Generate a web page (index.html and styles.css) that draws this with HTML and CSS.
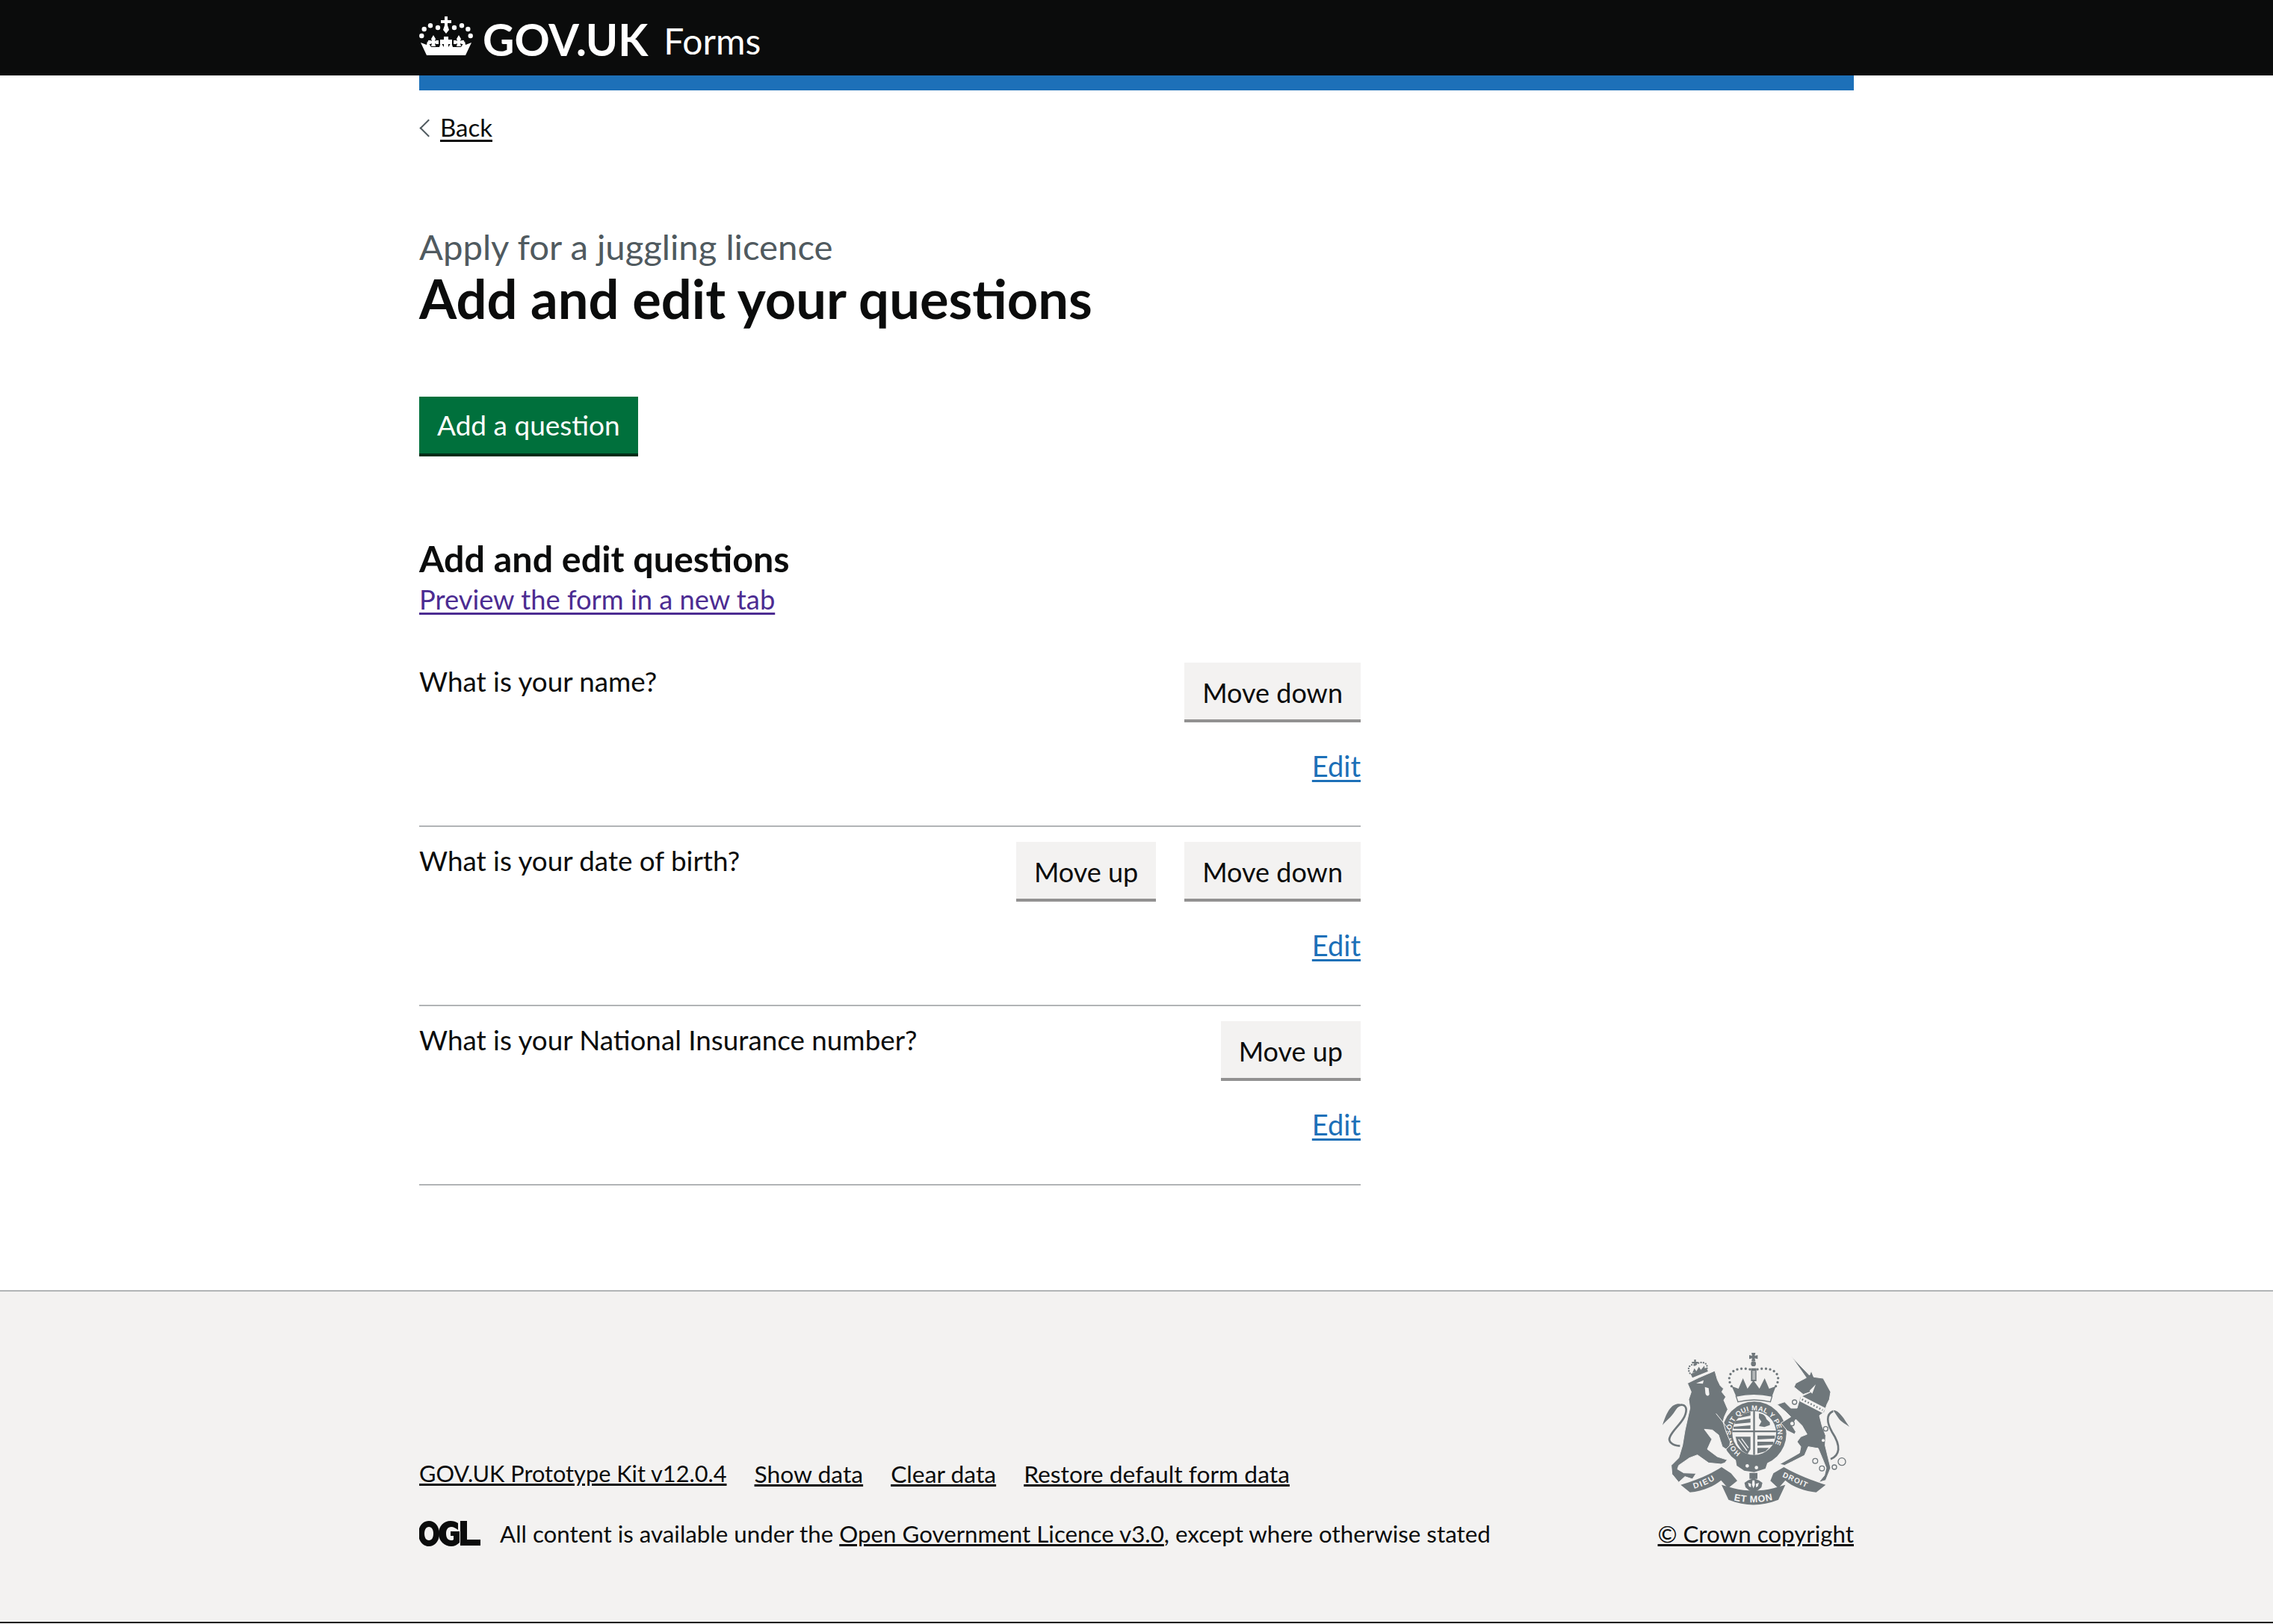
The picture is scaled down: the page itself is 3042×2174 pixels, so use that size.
FILE: index.html
```html
<!DOCTYPE html>
<html lang="en">
<head>
    <meta charset="UTF-8">
    <title>Add and edit your questions - GOV.UK Forms</title>
    <link rel="stylesheet" href="styles.css">
</head>
<body>
    <header class="header">
        <div class="width-container header-inner">
            <a class="logo" href="#">
                <svg class="crown" viewBox="0 0 72 52" aria-hidden="true">
                    <g fill="#fff">
                        <circle cx="3.300" cy="26" r="3.200"/><circle cx="68.700" cy="26" r="3.200"/>
                        <circle cx="6.700" cy="17" r="3.200"/><circle cx="65.300" cy="17" r="3.200"/>
                        <circle cx="15" cy="12.300" r="3.200"/><circle cx="57" cy="12.300" r="3.200"/>
                        <circle cx="25" cy="15" r="3.200"/><circle cx="47" cy="15" r="3.200"/>
                        <path d="M34 0h4v5h5v4h-5v3l2 6-4 5-4-5 2-6V9h-5V5h5z"/>
                        <path d="M19 25l3 5-1 3 2-1h3v5h-3l-2-1 1 4h-6l1-4-2 1h-3v-5h3l2 1-1-3z"/>
                        <path d="M53 25l3 5-1 3 2-1h3v5h-3l-2-1 1 4h-6l1-4-2 1h-3v-5h3l2 1-1-3z"/>
                        <path d="M33 27h6v4h5v6h-5v4h-6v-4h-5v-6h5z"/>
                        <path d="M2 35l8 3 1-5 5 8h11l2-6 4 6h6l4-6 2 6h11l5-8 1 5 8-3-8 17H10z"/>
                    </g>
                </svg>
                <span class="logo-text">GOV.UK</span>
            </a>
            <a class="service-name" href="#">Forms</a>
        </div>
    </header>

    <div class="width-container">
        <div class="blue-bar"></div>
        <a class="back-link" href="#">Back</a>

        <main class="main">
            <span class="caption">Apply for a juggling licence</span>
            <h1 class="heading-xl">Add and edit your questions</h1>
            <a class="button button-green" href="#">Add a question</a>

            <h2 class="heading-m">Add and edit questions</h2>
            <a class="preview-link" href="#">Preview the form in a new tab</a>

            <ul class="question-list">
                <li class="question">
                    <span class="question-text">What is your name?</span>
                    <div class="question-actions">
                        <div class="button-row">
                            <button class="button button-grey">Move down</button>
                        </div>
                        <a class="edit-link" href="#">Edit</a>
                    </div>
                </li>
                <li class="question">
                    <span class="question-text">What is your date of birth?</span>
                    <div class="question-actions">
                        <div class="button-row">
                            <button class="button button-grey">Move up</button>
                            <button class="button button-grey">Move down</button>
                        </div>
                        <a class="edit-link" href="#">Edit</a>
                    </div>
                </li>
                <li class="question">
                    <span class="question-text">What is your National Insurance number?</span>
                    <div class="question-actions">
                        <div class="button-row">
                            <button class="button button-grey">Move up</button>
                        </div>
                        <a class="edit-link" href="#">Edit</a>
                    </div>
                </li>
            </ul>
        </main>
    </div>

    <footer class="footer">
        <div class="width-container footer-inner">
            <div class="footer-meta">
                <ul class="footer-links">
                    <li class="kit-version"><a href="#">GOV.UK Prototype Kit v12.0.4</a></li>
                    <li><a href="#">Show data</a></li>
                    <li><a href="#">Clear data</a></li>
                    <li><a href="#">Restore default form data</a></li>
                </ul>
                <div class="licence">
                    <svg class="ogl" viewBox="0 0 82 34" aria-hidden="true">
                        <g fill="#0b0c0c">
                            <path fill-rule="evenodd" d="M13 0c8 0 14 7 14 17s-6 17-14 17S-1 27-1 17 5 0 13 0zm0 8c-4 0-6 4-6 9s2 9 6 9 6-4 6-9-2-9-6-9z"/>
                            <path d="M42 0c4 0 7 1 10 3v9c-3-2-6-4-9-4-5 0-7 4-7 9s2 9 7 9c1 0 2 0 3-1v-5h-4v-6h12v15c-3 3-7 5-11 5-9 0-17-7-17-17S33 0 42 0z"/>
                            <path d="M55 0h9v25h18v8H55z"/>
                        </g>
                    </svg>
                    <span>All content is available under the <a href="#">Open Government Licence v3.0</a>, except where otherwise stated</span>
                </div>
            </div>
            <div class="copyright">
                <svg class="crest" viewBox="135 88 750 612" aria-hidden="true">
                    <defs>
                        <path id="ring-arc" d="M449 490A94 94 0 1 1 557 490"/>
                        <path id="dieu-arc" d="M262 634Q320 618 372 580"/>
                        <path id="droit-arc" d="M615 585Q670 610 735 640"/>
                        <path id="motto-arc" d="M412 678Q498 700 588 676"/>
                        <clipPath id="shield-clip"><circle cx="503" cy="410" r="88"/></clipPath>
                    </defs>

                    <!-- ring and shield -->
                    <circle fill="#6f777b" cx="503" cy="413" r="129"/>
                    <circle fill="#f3f2f1" cx="503" cy="410" r="88"/>
                    <g fill="#6f777b" clip-path="url(#shield-clip)">
                        <path d="M499 316h7v196h-7zM410 400h190v7H410z"/>
                        <path d="M430 342l58-18v16l-58 12zM425 362l63-10v16l-63 6zM420 385l68-6v14h-68z"/>
                        <path d="M522 332c14-2 28 10 30 22l14 14v10l-22 8-22-4 10-18-10-14z"/>
                        <path d="M428 425h60v50l-12 20-22-14-18-28z"/>
                        <path d="M516 420h70v12l-70 4zM516 445h64v12l-64 4zM516 470h46l-14 14-32 8z"/>
                    </g>
                    <path fill="none" stroke="#f3f2f1" stroke-width="4" d="M440 435l34 46M452 432l28 38"/>
                    <text fill="#f3f2f1" class="crest-text" font-size="28" letter-spacing="1.300"><textPath href="#ring-arc">HONI SOIT QUI MAL Y PENSE</textPath></text>

                    <!-- royal crown -->
                    <g fill="#6f777b">
                        <path d="M492 88h16l-3 12 12-3v16l-12-3 3 12h-16l3-12-12 3V97l12 3z"/>
                        <circle cx="500" cy="132" r="10"/>
                        <path d="M490 150h22v52h-22z"/>
                        <path d="M413 222l27 10 18-42 18 42 24-34 24 34 21-42 18 42 27-10-15 40q-75-14-145 0z"/>
                    </g>
                    <path fill="#f3f2f1" d="M497 160h3v36h-3zM503 160h3v36h-3z"/>
                    <path fill="#f3f2f1" stroke="#6f777b" stroke-width="4" d="M430 262q70-16 145 0l-7 23q-65-16-130 0z"/>
                    <g fill="none" stroke="#6f777b" stroke-width="10" stroke-linecap="round" stroke-dasharray="0 17">
                        <path d="M412 222C385 175 420 140 490 155"/>
                        <path d="M590 222C617 175 582 140 512 155"/>
                    </g>

                    <!-- scroll under the shield -->
                    <path fill="#6f777b" d="M428 510l30-8 45 18 40-4 20-8-15 45-45 14-40-6-30-20z"/>
                    <g fill="#f3f2f1">
                        <circle cx="475" cy="542" r="7"/><circle cx="512" cy="549" r="7"/>
                    </g>

                    <!-- lion -->
                    <g transform="translate(105 60)">
                        <path fill="#6f777b" stroke="#f3f2f1" stroke-width="3" d="M130 150L175 128L240 100L250 135L262 160L275 172L268 185L284 205L276 218L292 255L278 285L273 305L285 345L302 385L300 400L285 415L270 405L262 380L255 358L230 338L198 335L228 375L210 415L250 445L290 458L280 470L265 475L215 470L170 438L138 450L95 480L90 495L115 510L165 512L150 535L120 525L95 548L68 515L65 480L95 450L110 400L120 340L140 250L135 215L145 185Z"/>
                        <path fill="#f3f2f1" d="M165 150L195 138L192 152ZM200 165L215 170L218 195C212 205 204 200 202 190Z"/>
                        <path fill="none" stroke="#f3f2f1" stroke-width="3" d="M245 272L300 340"/>
                        <path fill="none" stroke="#6f777b" stroke-width="8" d="M100 402C70 400 50 385 60 365C75 330 125 300 125 255C122 232 100 232 82 250"/>
                        <path fill="#6f777b" d="M100 233C70 230 50 255 30 318C45 300 62 290 80 262Z"/>
                        <!-- lion crown -->
                        <path fill="#6f777b" d="M143 113L205 88L213 102L150 128ZM150 108l8-18 8 12 10-18 8 12 14-16 2 14Z"/>
                        <path fill="#6f777b" d="M157 55h7v9h9v7h-9v9h-7v-9h-9v-7h9z"/>
                        <path fill="none" stroke="#6f777b" stroke-width="7" stroke-linecap="round" stroke-dasharray="0 10" d="M140 110C125 85 145 70 160 78C175 62 215 60 208 92"/>
                    </g>

                    <!-- unicorn -->
                    <g transform="translate(480 60)">
                        <path fill="#6f777b" stroke="#f3f2f1" stroke-width="3" d="M232 128L172 42L245 118L252 100L262 125L300 130L330 185L325 215L315 235L305 265L285 280L295 320L310 360L308 400L320 450L330 490L310 540L282 548L305 520L312 490L296 450L280 412L240 405L225 440L175 465L145 480L125 475L170 450L205 430L210 405L195 385L210 365L235 355L215 320L190 295L175 320L190 345L185 355L155 340L130 310L170 285L150 265L115 235L145 225L170 250L195 250L208 205L240 190L250 185L220 195L195 175L183 165L190 150Z"/>
                        <path fill="#f3f2f1" d="M245 180L270 155L256 192ZM212 200L310 250L298 270L205 222Z"/>
                        <path fill="none" stroke="#6f777b" stroke-width="7" stroke-dasharray="5 8" d="M215 215L298 258"/>
                        <path fill="none" stroke="#6f777b" stroke-width="8" d="M330 455C365 440 375 405 335 345C315 310 310 275 340 262"/>
                        <path fill="#6f777b" d="M340 258C365 258 385 295 405 325C385 310 370 305 358 285Z"/>
                        <g fill="#f3f2f1">
                            <circle cx="300" cy="380" r="6"/><circle cx="275" cy="415" r="6"/>
                        </g>
                        <g fill="none" stroke="#6f777b" stroke-width="4">
                            <circle cx="185" cy="226" r="9" fill="#f3f2f1"/><circle cx="175" cy="312" r="9" fill="#f3f2f1"/>
                            <circle cx="310" cy="333" r="9" fill="#f3f2f1"/>
                            <circle cx="268" cy="462" r="10"/><circle cx="295" cy="492" r="10"/>
                            <circle cx="345" cy="487" r="9"/><circle cx="375" cy="465" r="15"/>
                        </g>
                    </g>

                    <!-- ribbons -->
                    <g fill="#6f777b">
                        <path d="M208 618C270 600 320 580 372 547L410 572L435 602L398 632L370 600C340 625 290 645 245 648Z"/>
                        <path d="M790 618C735 600 680 580 622 547L580 572L568 602L600 632L628 600C655 625 710 645 752 648Z"/>
                        <path d="M372 618L420 632C470 645 530 645 580 632L628 618L600 678C530 705 470 705 400 678Z"/>
                        <path d="M484 570h32v24h-10l16 6 14 10-4 18-14 12-18 8-18-8-14-12-4-18 14-10 16-6h-10z"/>
                    </g>
                    <path fill="#f3f2f1" d="M496 600h8l2 18-6 14-6-14zM478 610l12 4 0 14-8-4zM522 610l-12 4 0 14 8-4z"/>
                    <g fill="#f3f2f1" class="crest-text">
                        <text font-size="32" letter-spacing="5"><textPath href="#dieu-arc">DIEU</textPath></text>
                        <text font-size="30" letter-spacing="3"><textPath href="#droit-arc">DROIT</textPath></text>
                        <text font-size="38" letter-spacing="2" text-anchor="middle"><textPath href="#motto-arc" startOffset="50%">ET MON</textPath></text>
                    </g>
                </svg>
                <a class="copyright-link" href="#">© Crown copyright</a>
            </div>
        </div>
    </footer>
</body>
</html>
```

FILE: styles.css
```css
* {
    box-sizing: border-box;
}

body {
    margin: 0;
    background-color: #fff;
    color: #0b0c0c;
    font-family: Lato, Arial, sans-serif;
    font-size: 36.800px;
    line-height: 50px;
}

a {
    color: inherit;
}

.width-container {
    width: 1920px;
    margin-left: 561px;
}

/* Header */
.header {
    height: 101px;
    background-color: #0b0c0c;
}

.header-inner {
    display: flex;
    align-items: flex-start;
    height: 101px;
    color: #fff;
}

.logo {
    display: flex;
    color: #fff;
    text-decoration: none;
}

.crown {
    width: 72px;
    height: 52px;
    margin-top: 22px;
}

.logo-text {
    margin-left: 13px;
    margin-top: 17px;
    font-size: 58.500px;
    line-height: 70px;
    font-weight: 700;
}

.service-name {
    margin-left: 21px;
    margin-top: 24px;
    font-size: 48px;
    line-height: 62px;
    color: #fff;
    text-decoration: none;
}

.blue-bar {
    height: 20px;
    background-color: #1d70b8;
}

/* Back link */
.back-link {
    display: block;
    width: fit-content;
    margin-top: 29px;
    padding-left: 28px;
    position: relative;
    font-size: 33px;
    line-height: 40px;
    text-underline-offset: 4px;
}

.back-link::before {
    content: "";
    position: absolute;
    left: 4px;
    top: 13px;
    width: 15px;
    height: 15px;
    border-left: 2px solid #505a5f;
    border-bottom: 2px solid #505a5f;
    transform: rotate(45deg);
}

/* Main */
.main {
    display: block;
    padding-top: 111px;
}

.caption {
    display: block;
    font-size: 47.300px;
    line-height: 58px;
    color: #505a5f;
}

.heading-xl {
    margin: 0 0 92px;
    font-size: 72.300px;
    line-height: 80px;
    font-weight: 700;
}

.button {
    display: inline-block;
    height: 80px;
    padding: 0 24px;
    border: 0;
    font-family: inherit;
    font-size: 36px;
    line-height: 76px;
    text-decoration: none;
    cursor: pointer;
}

.button-green {
    background-color: #00703c;
    box-shadow: inset 0 -4px 0 #002d18;
    color: #fff;
    font-size: 37px;
}

.button-grey {
    background-color: #f3f2f1;
    box-shadow: inset 0 -4px 0 #929191;
    color: #0b0c0c;
}

.heading-m {
    margin: 106px 0 0;
    font-size: 48.400px;
    line-height: 60px;
    font-weight: 700;
}

.preview-link {
    display: inline-block;
    color: #4c2c92;
    font-size: 36.300px;
    text-underline-offset: 4px;
}

/* Question list */
.question-list {
    width: 1260px;
    margin: 60px 0 0;
    padding: 0;
    list-style: none;
}

.question {
    display: flex;
    justify-content: space-between;
    height: 240px;
    padding-top: 20px;
    border-bottom: 2px solid #b1b4b6;
}

.question:first-child {
    height: 220px;
    padding-top: 0;
}

.question-actions {
    display: flex;
    flex-direction: column;
    align-items: flex-end;
}

.button-row {
    display: flex;
    gap: 38px;
}

.edit-link {
    margin-top: 33px;
    color: #1d70b8;
    font-size: 38px;
    text-underline-offset: 4px;
}

/* Footer */
.footer {
    margin-top: 140px;
    height: 446px;
    background-color: #f3f2f1;
    border-top: 2px solid #b1b4b6;
    border-bottom: 2px solid #0b0c0c;
    font-size: 31.800px;
    line-height: 40px;
}

.footer-inner {
    display: flex;
    justify-content: space-between;
    align-items: flex-end;
    height: 344px;
}

.footer-links {
    display: flex;
    gap: 37px;
    margin: 0 0 40px;
    padding: 0;
    list-style: none;
}

.kit-version {
    font-size: 30.700px;
}

.licence {
    display: flex;
    align-items: center;
    gap: 26px;
    font-size: 31.300px;
}

.ogl {
    width: 82px;
    height: 34px;
}

.copyright {
    display: flex;
    flex-direction: column;
    align-items: center;
    font-size: 31.300px;
}

.crest {
    width: 250px;
    height: 204px;
    margin-bottom: 18px;
}

.crest-text {
    font-family: "Liberation Sans", sans-serif;
    font-weight: 700;
}
```
